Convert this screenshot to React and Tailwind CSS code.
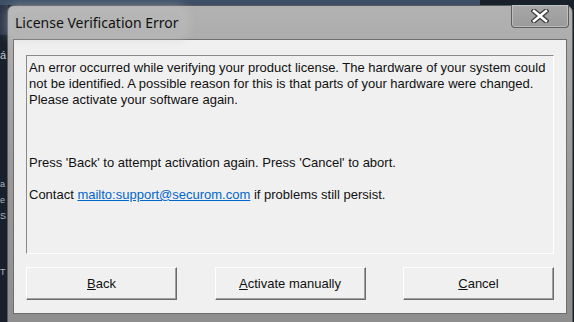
import React from 'react'

function Btn({ first, rest }) {
  return (
    <button className="w-[151px] h-[33px] bg-[#f0f0f0] border border-t-white border-l-white border-r-[#6a6a6a] border-b-[#6a6a6a] shadow-[inset_-1px_-1px_0_#a0a0a0] text-[13px] text-[#111] flex items-center justify-center">
      <span><span className="underline">{first}</span>{rest}</span>
    </button>
  )
}

export default function App() {
  return (
    <div className="relative w-[574px] h-[322px] overflow-hidden bg-[#18202c]" style={{ fontFamily: '"Liberation Sans", Arial, sans-serif' }}>
      {/* desktop behind */}
      <div className="absolute left-0 top-0 w-[480px] h-[5px] bg-[#3d4f66]" />
      <div className="absolute left-0 top-[5px] w-[8px] h-[30px] bg-[#2a3547]" />
      <div className="absolute left-0 top-[48px] text-[11px] leading-[15px] text-[#c8ccd4]">á</div>
      <div className="absolute left-0 top-[176px] text-[9px] leading-[16px] text-[#b0b4bc] flex flex-col">
        <span>a</span>
        <span>e</span>
        <span>S</span>
      </div>
      <div className="absolute left-0 top-[266px] text-[9px] text-[#b0b4bc]">T</div>

      {/* window */}
      <div className="absolute left-[7px] top-[5px] w-[566px] h-[324px] rounded-t-[7px] border border-[#5a5a5a] bg-gradient-to-b from-[#b2b2b2] via-[#9a9a9a] to-[#8e8e8e] flex flex-col">
        <div className="h-[33px] flex items-center pl-[5px] relative">
          <span className="text-[14px] text-[#111] px-[2px] rounded-[6px] bg-[#bdbdbd]/40 shadow-[0_0_10px_8px_rgba(200,200,200,0.35)]" style={{ fontFamily: '"Noto Sans", "Open Sans", sans-serif' }}>
            License Verification Error
          </span>
          <div className="absolute left-[503px] top-[-1px] w-[58px] h-[23px] rounded-b-[4px] border border-[#5e5e5e] border-t-0 shadow-[inset_0_0_0_1px_rgba(210,210,210,0.6)] bg-gradient-to-b from-[#a8a8a8] to-[#9a9a9a] flex items-center justify-center">
            <svg width="18" height="14" viewBox="0 0 18 14">
              <path d="M3 2 L15 12 M15 2 L3 12" stroke="#3a3a3a" strokeWidth="5" strokeLinecap="square" />
              <path d="M3 2 L15 12 M15 2 L3 12" stroke="#ffffff" strokeWidth="2.6" strokeLinecap="square" />
            </svg>
          </div>
        </div>

        <div className="mx-[5px] h-[275px] bg-[#f0f0f0] border border-[#6e6e6e] px-[12px] pt-[15px] flex flex-col">
          <div className="h-[199px] border border-t-[#8a8a8a] border-l-[#8a8a8a] border-r-white border-b-white pl-[2px] pt-[4px] text-[13px] leading-[16px] text-[#111] whitespace-nowrap">
            <p>An error occurred while verifying your product license. The hardware of your system could</p>
            <p>not be identified. A possible reason for this is that parts of your hardware were changed.</p>
            <p>Please activate your software again.</p>
            <p className="mt-[47px]">Press 'Back' to attempt activation again. Press 'Cancel' to abort.</p>
            <p className="mt-[16px]">
              Contact <span className="text-[#0066cc] underline">mailto:support@securom.com</span> if problems still persist.
            </p>
          </div>
          <div className="mt-[13px] flex justify-between pr-[0px]">
            <Btn first="B" rest="ack" />
            <Btn first="A" rest="ctivate manually" />
            <Btn first="C" rest="ancel" />
          </div>
        </div>
      </div>
    </div>
  )
}
